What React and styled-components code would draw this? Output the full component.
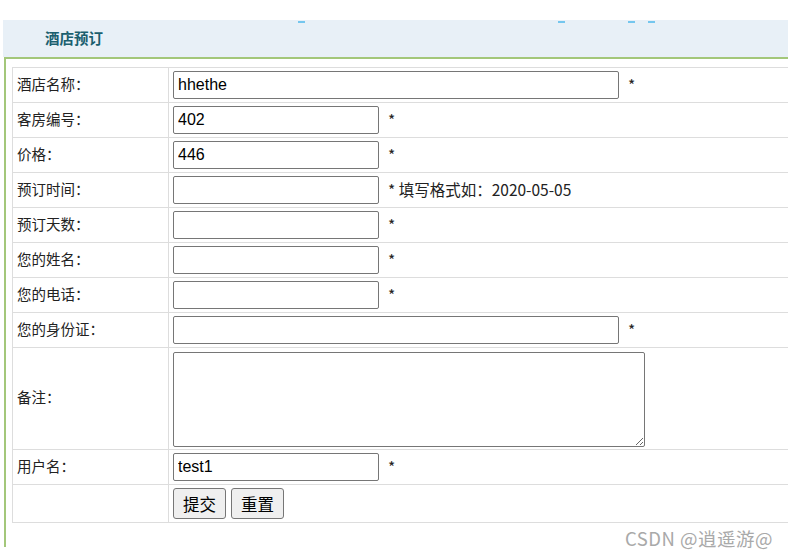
import React from 'react';
import styled, { createGlobalStyle } from 'styled-components';

const GlobalStyle = createGlobalStyle`
  html, body {
    margin: 0;
    padding: 0;
    background: #ffffff;
    overflow: hidden;
  }
  body {
    font-family: 'Noto Sans CJK SC', 'Liberation Sans', sans-serif;
    font-size: 13px;
    color: #333;
  }
`;

const Page = styled.div`
  position: relative;
  width: 788px;
  height: 557px;
  overflow: hidden;
  padding-top: 20px;
  box-sizing: border-box;
`;

const HeaderBand = styled.div`
  position: relative;
  margin-left: 3px;
  height: 37px;
  background: #e8f0f7;
  display: flex;
  align-items: center;
  padding-left: 42px;
`;

const Title = styled.span`
  font-size: 14.5px;
  font-weight: bold;
  color: #1a5f6f;
  line-height: 1;
`;

const Dash = styled.span`
  position: absolute;
  top: 1px;
  height: 2px;
  width: 7px;
  background: #74c6ee;
`;

const Content = styled.div`
  margin-left: 4px;
  border-top: 2px solid #a3c77a;
  border-left: 2px solid #a3c77a;
  padding: 8px 0 0 6px;
  height: 480px;
  overflow: hidden;
`;

const Table = styled.table`
  border-collapse: collapse;
  width: 830px;
  table-layout: fixed;
`;

const LabelCell = styled.td`
  width: 151px;
  border: 1px solid #dddddd;
  padding: 0 0 3px 4px;
  height: ${(p) => (p.$h || 34) - 3}px;
  vertical-align: middle;
  font-size: 14.5px;
  line-height: 1.2;
  color: #222;
  white-space: nowrap;
`;

const FieldCell = styled.td`
  border: 1px solid #dddddd;
  padding: 0 0 0 4px;
  height: ${(p) => p.$h || 34}px;
  vertical-align: middle;
  white-space: nowrap;
`;

const Field = styled.div`
  display: flex;
  align-items: center;
`;

const TextInput = styled.input`
  box-sizing: border-box;
  width: ${(p) => p.$w}px;
  height: 28px;
  border: 1px solid #767676;
  border-radius: 2px;
  padding: 0 4px;
  font-family: 'Liberation Sans', Arial, sans-serif;
  font-size: 16px;
  color: #000;
  background: #fff;
  outline: none;
`;

const TextArea = styled.textarea`
  box-sizing: border-box;
  width: 472px;
  height: 95px;
  border: 1px solid #767676;
  border-radius: 2px;
  font-family: 'Liberation Sans', Arial, sans-serif;
  font-size: 16px;
  display: block;
  margin-top: 1px;
`;

const Hint = styled.span`
  margin-left: 9px;
  font-size: 15.5px;
  line-height: 1.2;
  padding-bottom: 2px;
  color: #222;
`;

const Button = styled.button`
  box-sizing: border-box;
  height: 31px;
  padding: 0 9px;
  margin-right: 5px;
  border: 1px solid #767676;
  border-radius: 3px;
  background: #efefef;
  font-family: 'Noto Sans CJK SC', sans-serif;
  font-size: 16.5px;
  color: #000;
`;

const Watermark = styled.div`
  position: absolute;
  right: 15px;
  bottom: 6px;
  font-family: 'Noto Sans CJK SC', 'Liberation Sans', sans-serif;
  font-size: 18.5px;
  color: #a9a9a9;
  letter-spacing: 0.5px;
`;

const rows = [
  { label: '酒店名称：', value: 'hhethe', width: 446, hint: '*' },
  { label: '客房编号：', value: '402', width: 206, hint: '*' },
  { label: '价格：', value: '446', width: 206, hint: '*' },
  { label: '预订时间：', value: '', width: 206, hint: '* 填写格式如：2020-05-05' },
  { label: '预订天数：', value: '', width: 206, hint: '*' },
  { label: '您的姓名：', value: '', width: 206, hint: '*' },
  { label: '您的电话：', value: '', width: 206, hint: '*' },
  { label: '您的身份证：', value: '', width: 446, hint: '*' },
];

export default function App() {
  return (
    <>
      <GlobalStyle />
      <Page>
        <HeaderBand>
          <Dash style={{ left: 295 }} />
          <Dash style={{ left: 555 }} />
          <Dash style={{ left: 625 }} />
          <Dash style={{ left: 645 }} />
          <Title>酒店预订</Title>
        </HeaderBand>
        <Content>
          <Table>
            <tbody>
              {rows.map((r) => (
                <tr key={r.label}>
                  <LabelCell>{r.label}</LabelCell>
                  <FieldCell>
                    <Field>
                      <TextInput $w={r.width} defaultValue={r.value} />
                      <Hint>{r.hint}</Hint>
                    </Field>
                  </FieldCell>
                </tr>
              ))}
              <tr>
                <LabelCell $h={101}>备注：</LabelCell>
                <FieldCell $h={101}>
                  <TextArea />
                </FieldCell>
              </tr>
              <tr>
                <LabelCell>用户名：</LabelCell>
                <FieldCell>
                  <Field>
                    <TextInput $w={206} defaultValue="test1" />
                    <Hint>*</Hint>
                  </Field>
                </FieldCell>
              </tr>
              <tr>
                <LabelCell $h={37} />
                <FieldCell $h={37}>
                  <Field>
                    <Button type="button">提交</Button>
                    <Button type="button">重置</Button>
                  </Field>
                </FieldCell>
              </tr>
            </tbody>
          </Table>
        </Content>
        <Watermark>CSDN @逍遥游@</Watermark>
      </Page>
    </>
  );
}
